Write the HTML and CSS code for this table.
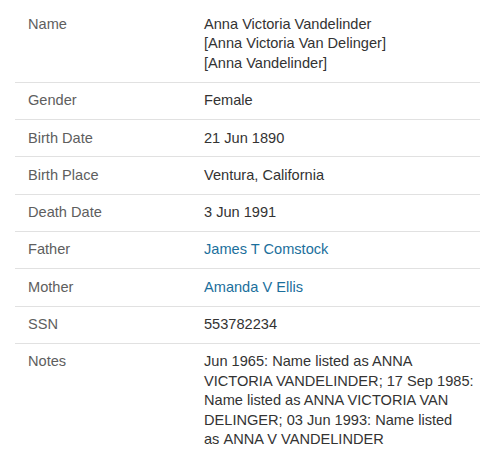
FILE: index.html
```html
<!DOCTYPE html>
<html>
<head>
<meta charset="utf-8">
<link rel="stylesheet" href="styles.css">
</head>
<body>
<table class="record">
  <tbody>
    <tr class="row first">
      <th class="label">Name</th>
      <td class="value">Anna Victoria Vandelinder<br>[Anna Victoria Van Delinger]<br>[Anna Vandelinder]</td>
    </tr>
    <tr class="row">
      <th class="label">Gender</th>
      <td class="value">Female</td>
    </tr>
    <tr class="row">
      <th class="label">Birth Date</th>
      <td class="value">21 Jun 1890</td>
    </tr>
    <tr class="row">
      <th class="label">Birth Place</th>
      <td class="value">Ventura, California</td>
    </tr>
    <tr class="row">
      <th class="label">Death Date</th>
      <td class="value">3 Jun 1991</td>
    </tr>
    <tr class="row">
      <th class="label">Father</th>
      <td class="value"><a class="link" href="#">James T Comstock</a></td>
    </tr>
    <tr class="row">
      <th class="label">Mother</th>
      <td class="value"><a class="link" href="#">Amanda V Ellis</a></td>
    </tr>
    <tr class="row">
      <th class="label">SSN</th>
      <td class="value">553782234</td>
    </tr>
    <tr class="row last">
      <th class="label">Notes</th>
      <td class="value">Jun 1965: Name listed as ANNA VICTORIA VANDELINDER; 17 Sep 1985: Name listed as ANNA VICTORIA VAN DELINGER; 03 Jun 1993: Name listed as&nbsp;ANNA V VANDELINDER</td>
    </tr>
  </tbody>
</table>
</body>
</html>
```
FILE: styles.css
```css
html, body {
  margin: 0;
  padding: 0;
  background: #ffffff;
}
body {
  padding: 6.6px 16px 0 15px;
  font-family: "Liberation Sans", Arial, sans-serif;
  font-size: 14.6px;
  line-height: 19.5px;
  color: #333333;
}
.record {
  width: 465px;
  border-collapse: collapse;
  table-layout: fixed;
}
.row {
  border-bottom: 1px solid #e1e1e1;
}
.row.last {
  border-bottom: none;
}
.label {
  width: 189px;
  box-sizing: border-box;
  padding: 8.4px 8px 8.4px 13px;
  text-align: left;
  vertical-align: top;
  font-weight: normal;
  color: #5e5e5e;
}
.value {
  padding: 8.4px 0 8.4px 0;
  vertical-align: top;
  color: #333333;
}
.link {
  color: #1b6f9c;
  text-decoration: none;
}
```
